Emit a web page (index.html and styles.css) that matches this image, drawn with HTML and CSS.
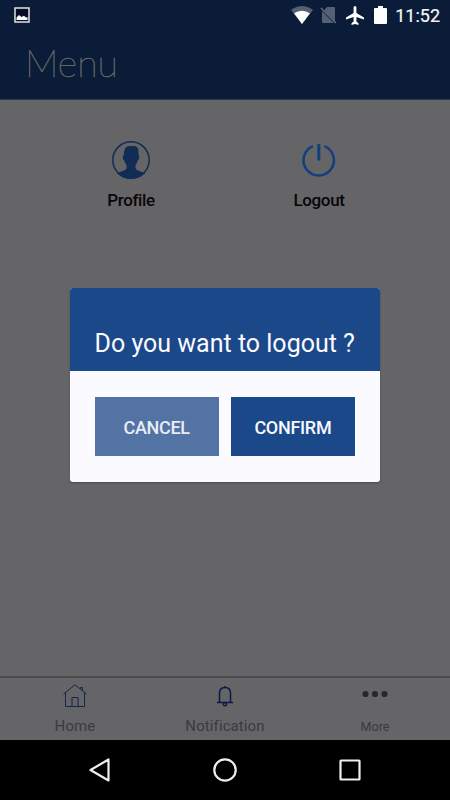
FILE: index.html
```
<!DOCTYPE html>
<html lang="en">
<head>
<meta charset="utf-8">
<title>Menu</title>
<link rel="stylesheet" href="styles.css">
</head>
<body>
<div class="screen">
  <header class="header">
    <div class="status">
      <svg class="status-image" width="16" height="16" viewBox="0 0 16 16"><rect x="1" y="1" width="14" height="14" fill="#080b28" stroke="#e2e2df" stroke-width="1.5"/><path d="M2.500 13V10.500L5 8l2.500 2L10 8.800l2 1.700 1.500-.5V13z" fill="#fff"/></svg>
      <svg class="status-wifi" width="22" height="18" viewBox="0 0 22 18"><path d="M0 4Q11-4 22 4L11 18z" fill="#546174"/><path d="M3 7.300Q11 2 19 7.300L11 18z" fill="#fff"/></svg>
      <svg class="status-sim" width="17" height="18" viewBox="0 0 17 18"><path d="M7 1h7q1 0 1 1v13L4 4.200zM2 5l12 12H3q-1 0-1-1z" fill="#546174"/><path d="M1 2l15 15" stroke="#68717e" stroke-width="1.300"/></svg>
      <svg class="status-plane" width="18" height="19" viewBox="0 0 18 19"><path d="M9 0q1.400 0 1.400 1.600V7L18 11.500v2L10.400 11v4.600l2.100 1.600V19L9 18l-3.500 1v-1.800l2.100-1.600V11L0 13.500v-2L7.600 7V1.600Q7.600 0 9 0z" fill="#fff"/></svg>
      <svg class="status-battery" width="13" height="18" viewBox="0 0 13 18"><path d="M4 0h5v2h3q1 0 1 1v14q0 1-1 1H1q-1 0-1-1V3q0-1 1-1h3z" fill="#fff"/></svg>
      <span class="clock">11:52</span>
    </div>
    <h1 class="title">Menu</h1>
  </header>
  <main class="menu">
    <div class="menu-item">
      <svg width="38" height="38" viewBox="0 0 38 38"><circle cx="19" cy="19" r="18.200" fill="none" stroke="#122d55" stroke-width="1.500"/><path d="M12.500 9Q13 5 18 5h3q5.500 0 5.500 5v4q1 0 .7 2.500-.4 2.700-1.500 3-.6 3-2.200 4.500v3q0 1.500 2 2.200l7.500 3Q27 37.500 19 37.500T5 32.200l7.500-3q2-.7 2-2.200v-3q-1.600-1.500-2.200-4.500-1.200-.3-1.500-3Q10.600 14 12 14q-.6-3 .5-5z" fill="#122d55"/></svg>
      <span class="menu-label">Profile</span>
    </div>
    <div class="menu-item">
      <svg width="38" height="38" viewBox="0 0 38 38"><path d="M13 5.200A15.200 15.200 0 1 0 24.400 5.200" fill="none" stroke="#123f7e" stroke-width="2.500"/><path d="M18.800 3v16.500" stroke="#123f7e" stroke-width="3"/></svg>
      <span class="menu-label">Logout</span>
    </div>
  </main>
  <nav class="tabs">
    <div class="tab">
      <svg width="24" height="24" viewBox="0 0 24 24" fill="none" stroke="#14254e" stroke-width="1"><path d="M.5 10L12 .8 23.500 10M2.500 8.800v13.700h19V8.800M9 22.500v-9h6v9M17.500 5V3.500h2v3.300"/></svg>
      <span class="tab-label tab-home">Home</span>
    </div>
    <div class="tab">
      <svg width="24" height="24" viewBox="0 0 24 24" fill="none" stroke="#0d1845" stroke-width="1.500"><path d="M4 18.500h16M6.500 18.500V9Q6.500 3.500 12 3.500T17.500 9v9.500M12 3.500V2"/><circle cx="12" cy="20.200" r="1.600"/></svg>
      <span class="tab-label tab-notification">Notification</span>
    </div>
    <div class="tab">
      <svg width="26" height="24" viewBox="0 0 26 24" fill="#222930"><circle cx="3.500" cy="10" r="3.100"/><circle cx="13" cy="10" r="3.100"/><circle cx="22.500" cy="10" r="3.100"/></svg>
      <span class="tab-label tab-more">More</span>
    </div>
  </nav>
  <footer class="system-nav">
    <svg width="24" height="26" viewBox="0 0 24 26"><path d="M20.500 2.500v21L2.500 13z"/></svg>
    <svg width="26" height="26" viewBox="0 0 26 26"><circle cx="13" cy="13" r="10.700"/></svg>
    <svg width="26" height="26" viewBox="0 0 26 26"><rect x="3.500" y="3.500" width="19" height="19" rx=".5"/></svg>
  </footer>
  <section class="dialog">
    <h2 class="dialog-title">Do you want to logout ?</h2>
    <div class="dialog-actions">
      <button class="button cancel">CANCEL</button>
      <button class="button confirm">CONFIRM</button>
    </div>
  </section>
</div>
</body>
</html>
```

FILE: styles.css
```
* { box-sizing: border-box; }
body { margin: 0; font-family: Roboto, sans-serif; }
svg { display: block; flex: none; }
.screen {
  position: relative;
  width: 450px;
  height: 800px;
  display: grid;
  grid-template-rows: 100px 576px 64px 60px;
  background: #656467;
  overflow: hidden;
}
.header { background: #0a1c37; border-bottom: 1px solid #263a57; }
.status { display: flex; align-items: center; height: 30px; padding: 0 10px 0 14px; }
.status-wifi { margin-left: 261px; }
.status-sim { margin-left: 7px; }
.status-plane { margin-left: 9px; }
.status-battery { margin-left: 10px; }
.clock { margin-left: auto; padding-top: 1px; color: #f6f7f9; font-size: 18px; line-height: 30px; font-weight: 400; white-space: nowrap; -webkit-text-stroke: .2px #f6f7f9; }
.title {
  margin: 10px 0 0 25px;
  color: #656668;
  font: 100 37.500px/46px Lato, sans-serif;
  -webkit-text-stroke: .6px #656668;
}
.menu { display: grid; grid-template-columns: repeat(2, 188px); padding: 41px 37px 0; align-content: start; }
.menu-item { display: flex; flex-direction: column; align-items: center; }
.menu-label { margin-top: 11px; font-size: 17px; line-height: 20px; font-weight: 500; letter-spacing: -.35px; color: #070707; }
.tabs { display: grid; grid-template-columns: repeat(3, 1fr); border-top: 2px solid #4b4b4d; }
.tab { display: flex; flex-direction: column; align-items: center; padding-top: 6px; }
.tab-label { margin-top: 8px; font-size: 15px; line-height: 20px; letter-spacing: .1px; color: #3b3b3d; }
.tab-more { font-size: 12.500px; margin-top: 9px; }
.system-nav {
  display: flex;
  justify-content: space-between;
  align-items: center;
  padding: 0 87px 0 88px;
  background: #000;
}
.system-nav svg { fill: none; stroke: #eee; stroke-width: 2.200; stroke-linejoin: round; }
.dialog {
  position: absolute;
  left: 69.500px;
  top: 288px;
  width: 310.500px;
  height: 193.500px;
  overflow: hidden;
  border-radius: 3px;
  background: #fbfaff;
  box-shadow: 0 1px 2px rgba(0, 0, 0, .3);
}
.dialog-title {
  margin: 0;
  height: 83px;
  padding-top: 39px;
  background: #1b4889;
  color: #fbfaff;
  font-size: 25px;
  line-height: 34px;
  font-weight: 400;
  text-align: center;
  white-space: nowrap;
}
.dialog-actions { display: grid; grid-template-columns: 1fr 1fr; gap: 12px; padding: 26px 25px 25px; }
.button {
  height: 59px;
  padding: 2px 0 0;
  border: 0;
  color: #f8f8ff;
  font: 500 18px/57px Roboto, sans-serif;
  letter-spacing: -.3px;
}
.cancel { background: #5273a4; color: #e9edf5; }
.confirm { background: #1b4889; }
```
